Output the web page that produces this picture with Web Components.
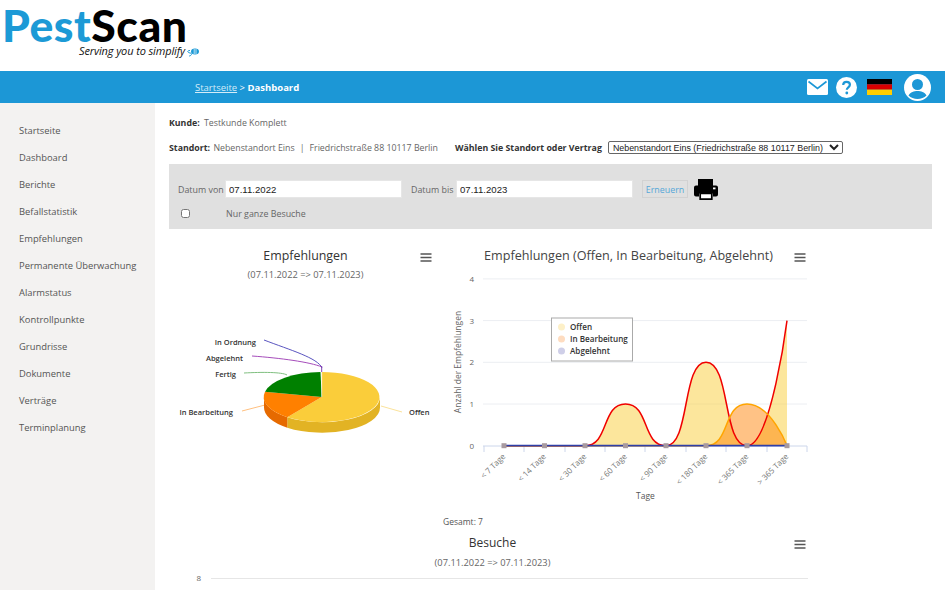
<!DOCTYPE html>
<html lang="de">
<head>
<meta charset="utf-8">
<title>PestScan Dashboard</title>
<style>
    html, body { margin: 0; padding: 0; background: #fff; }
    body { font-family: "Open Sans", "Liberation Sans", sans-serif; color: #555; width: 945px; height: 590px; overflow: hidden; }
</style>
</head>
<body>
<pest-app>
    <pest-logo slot="logo"></pest-logo>
    <pest-topbar slot="topbar"></pest-topbar>
    <pest-nav slot="nav">
        <nav-item>Startseite</nav-item>
        <nav-item>Dashboard</nav-item>
        <nav-item>Berichte</nav-item>
        <nav-item>Befallstatistik</nav-item>
        <nav-item>Empfehlungen</nav-item>
        <nav-item>Permanente Überwachung</nav-item>
        <nav-item>Alarmstatus</nav-item>
        <nav-item>Kontrollpunkte</nav-item>
        <nav-item>Grundrisse</nav-item>
        <nav-item>Dokumente</nav-item>
        <nav-item>Verträge</nav-item>
        <nav-item>Terminplanung</nav-item>
    </pest-nav>
    <customer-info></customer-info>
    <filter-bar></filter-bar>
    <div style="display:flex; align-items:flex-start">
        <pie-chart></pie-chart>
        <area-chart></area-chart>
    </div>
    <visits-chart></visits-chart>
</pest-app>

<script>
const burger = (x, y) => `<path d="M${x} ${y}h11M${x} ${y + 3.5}h11M${x} ${y + 7}h11" stroke="#555" stroke-width="1.7" fill="none"/>`

customElements.define("pest-app", class extends HTMLElement {
    constructor() {
        super()
        this.attachShadow({mode: "open"}).innerHTML = `
        <style>
            :host { display: block; width: 945px; height: 590px; overflow: hidden; }
            .body { display: flex; height: 487px; }
            .content { flex: 1; padding: 0 13px 0 14px; min-width: 0; }
        </style>
        <slot name="logo"></slot>
        <slot name="topbar"></slot>
        <div class="body">
            <slot name="nav"></slot>
            <div class="content"><slot></slot></div>
        </div>
        `
    }
})

customElements.define("pest-logo", class extends HTMLElement {
    constructor() {
        super()
        this.attachShadow({mode: "open"}).innerHTML = `
        <style>
            :host { display: block; height: 71px; box-sizing: border-box; padding: 0 0 0 2px; }
            .name { font: 900 43px/52px Lato, "Open Sans", sans-serif; letter-spacing: .5px; color: #000; transform: scaleX(1.035); transform-origin: left; }
            .name span { color: #1c9ad6; }
            .tag { display: flex; align-items: center; gap: 1px; margin: -8px 0 0 77px; font: italic 11px/13px "Open Sans", sans-serif; color: #111; letter-spacing: -.12px; }
            svg { margin-top: 3px; }
        </style>
        <div class="name"><span>Pest</span>Scan</div>
        <div class="tag">Serving you to simplify
            <svg width="13" height="9" viewBox="0 0 13 9"><ellipse cx="9" cy="3.5" rx="4" ry="3" fill="#1c9ad6"/><path d="M8.2 1v5M10 1v5" stroke="#fff" stroke-width=".7"/><path d="M4 2.5c-3 0-3 2 0 2.500s1 3-1 3" stroke="#1c9ad6" fill="none"/></svg>
        </div>
        `
    }
})

customElements.define("pest-topbar", class extends HTMLElement {
    constructor() {
        super()
        this.attachShadow({mode: "open"}).innerHTML = `
        <style>
            :host { display: flex; align-items: center; height: 32px; background: #1c97d6; color: #fff; font: 9.5px "Open Sans", sans-serif; padding: 0 14px 0 195px; box-sizing: border-box; }
            a { color: #d5ecf8; text-decoration: underline; }
            b { font-weight: 700; }
            .crumbs { flex: 1; }
            .icons { display: flex; align-items: center; }
            svg { display: block; }
        </style>
        <div class="crumbs"><a>Startseite</a> &gt; <b>Dashboard</b></div>
        <div class="icons">
            <svg width="21" height="16" viewBox="0 0 21 16" style="margin-right:8px"><rect width="21" height="16" rx="1.5" fill="#fff"/><path d="M1.5 2.5l9 7 9-7" fill="none" stroke="#1c97d6" stroke-width="1.6"/></svg>
            <svg width="21" height="21" viewBox="0 0 21 21" style="margin-right:10px"><circle cx="10.5" cy="10.5" r="10.5" fill="#fff"/><path d="M7.2 8c0-2 1.5-3.2 3.4-3.2s3.3 1.1 3.3 2.9c0 2.600-3.100 2.600-3.100 5.100" fill="none" stroke="#1c97d6" stroke-width="2.200"/><circle cx="10.800" cy="16" r="1.400" fill="#1c97d6"/></svg>
            <svg width="25" height="16" viewBox="0 0 25 16" style="margin-right:12px"><rect width="25" height="5.400" fill="#000"/><rect y="5.300" width="25" height="5.400" fill="#d80000"/><rect y="10.600" width="25" height="5.400" fill="#ffce00"/></svg>
            <svg width="27" height="27" viewBox="0 0 27 27"><circle cx="13.500" cy="13.500" r="13.500" fill="#fff"/><circle cx="13.500" cy="10.500" r="5.500" fill="#1c97d6"/><path d="M4.500 21.500c2-3.500 5.500-4.500 9-4.500s7 1 9 4.500c-2.200 2.300-5.500 3.500-9 3.500s-6.800-1.200-9-3.500z" fill="#1c97d6"/></svg>
        </div>
        `
    }
})

customElements.define("pest-nav", class extends HTMLElement {
    constructor() {
        super()
        this.attachShadow({mode: "open"}).innerHTML = `
        <style>
            :host { display: block; width: 155px; height: 100%; background: #f3f2f1; box-sizing: border-box; padding: 14px 0 0 19px; flex: none; }
        </style>
        <slot></slot>
        `
    }
})

customElements.define("nav-item", class extends HTMLElement {
    constructor() {
        super()
        this.attachShadow({mode: "open"}).innerHTML = `
        <style>
            :host { display: block; height: 27px; font: 9.4px/27px "Open Sans", sans-serif; color: #555; white-space: nowrap; }
        </style>
        <slot></slot>
        `
    }
})

customElements.define("customer-info", class extends HTMLElement {
    constructor() {
        super()
        this.attachShadow({mode: "open"}).innerHTML = `
        <style>
            :host { display: block; font: 8.8px "Open Sans", sans-serif; color: #666; padding-top: 13px; height: 61px; box-sizing: border-box; }
            b { color: #333; font-weight: 700; margin-right: 2px; }
            .row { display: flex; align-items: center; height: 13px; white-space: nowrap; }
            .row + .row { margin-top: 12px; }
            .place { margin-right: 1px; }
            .sep { margin: 0 5px; }
            .pick { margin-left: 17px; margin-right: 6px; }
            select { width: 235px; height: 13px; padding: 0; font: 8.9px "Liberation Sans", sans-serif; color: #222; background: #fff; border: 1px solid #666; border-radius: 2px; outline: 0; }
        </style>
        <div class="row"><b>Kunde:</b>&nbsp;Testkunde Komplett</div>
        <div class="row"><b class="place">Standort:</b>&nbsp;Nebenstandort Eins<span class="sep">|</span>Friedrichstraße 88 10117 Berlin
            <b class="pick">Wählen Sie Standort oder Vertrag</b>
            <select><option>Nebenstandort Eins (Friedrichstraße 88 10117 Berlin)</option></select>
        </div>
        `
    }
})

customElements.define("filter-bar", class extends HTMLElement {
    constructor() {
        super()
        this.attachShadow({mode: "open"}).innerHTML = `
        <style>
            :host { display: block; height: 65px; background: #e0e0e0; box-sizing: border-box; padding: 14px 9px 0; font: 8.9px "Open Sans", sans-serif; color: #666; }
            .row { display: flex; align-items: center; }
            .row.top { height: 22px; }
            label { flex: none; white-space: nowrap; }
            input[type=text] { flex: none; width: 177px; height: 18px; box-sizing: border-box; border: 1px solid #e6e6e6; background: #fff; padding: 0 3px; font: 9.6px "Liberation Sans", sans-serif; color: #222; outline: 0; }
            .von { width: 47px; } .bis { width: 45px; margin-left: 9px; }
            button { flex: none; margin-left: 9px; width: 46px; height: 18px; padding: 0; background: #e0e0e0; border: 1px solid #d2d2d2; color: #55a7d8; font: 8.9px "Open Sans", sans-serif; }
            svg { flex: none; margin-left: 6px; display: block; }
            .check { margin-top: 5px; height: 16px; }
            input[type=checkbox] { margin: 0 0 0 3px; width: 9px; height: 9px; }
            .check span { margin-left: 36px; }
        </style>
        <div class="row top">
            <label class="von">Datum von</label><input type="text" value="07.11.2022">
            <label class="bis">Datum bis</label><input type="text" value="07.11.2023">
            <button>Erneuern</button>
            <svg width="24" height="21" viewBox="0 0 24 21"><path d="M4 0h15v7H4z" fill="#000"/><path d="M2 6.500h20a2 2 0 0 1 2 2v7a2 2 0 0 1-2 2h-3v-3H5v3H2a2 2 0 0 1-2-2v-7a2 2 0 0 1 2-2z" fill="#000"/><rect x="19" y="8.500" width="2.500" height="1.800" fill="#fff"/><path d="M6.200 14.500h11.600v5.600H6.200z" fill="#fff" stroke="#000" stroke-width="1.700"/></svg>
        </div>
        <div class="row check"><input type="checkbox"><span>Nur ganze Besuche</span></div>
        `
    }
})

customElements.define("pie-chart", class extends HTMLElement {
    constructor() {
        super()
        this.attachShadow({mode: "open"}).innerHTML = `
        <style>
            :host { display: block; width: 276px; height: 285px; flex: none; }
            svg { display: block; }
            text { font-family: "Open Sans", sans-serif; }
            .l { font-size: 7.500px; font-weight: 600; fill: #333; }
        </style>
        <svg width="276" height="285" viewBox="169 229 276 285">
            <text x="305.500" y="259.500" text-anchor="middle" font-size="12.400" fill="#333">Empfehlungen</text>
            <text x="305.500" y="278" text-anchor="middle" font-size="9.300" fill="#666">(07.11.2022 =&gt; 07.11.2023)</text>
            ${burger(420.500, 254)}
            <path d="M264 340C290 350 318 358 322 368" fill="none" stroke="#5a55c0"/>
            <path d="M252 356C280 358 310 362 322 367" fill="none" stroke="#a64dbb"/>
            <path d="M244 373C262 372 282 372 287 375" fill="none" stroke="#7fbf7f"/>
            <path d="M242 411L265 405" fill="none" stroke="#ffc080"/>
            <path d="M381 406L402 412" fill="none" stroke="#fbe39b"/>
            <text class="l" x="256" y="345" text-anchor="end">In Ordnung</text>
            <text class="l" x="243" y="361" text-anchor="end">Abgelehnt</text>
            <text class="l" x="236" y="377" text-anchor="end">Fertig</text>
            <text class="l" x="233" y="415" text-anchor="end">In Bearbeitung</text>
            <text class="l" x="409" y="415">Offen</text>
            <path d="M380 397A58 25 0 0 1 287.300 417.200V427.700A58 25 0 0 0 380 407.500Z" fill="#e2b324"/>
            <path d="M287.300 417.200A58 25 0 0 1 264 397V407.500A58 25 0 0 0 287.300 427.700Z" fill="#e66a00"/>
            <path d="M321.700 397V372A58 25 0 1 1 287.300 417.200Z" fill="#facd3a"/>
            <path d="M321.700 397L287.300 417.200A58 25 0 0 1 265 391.700Z" fill="#ff8000"/>
            <path d="M321.700 397L265 391.700A58 25 0 0 1 320.500 372Z" fill="#008000"/>
            <path d="M321.700 397V372" stroke="#fff" stroke-width=".6"/>
            <path d="M321.700 372V366" stroke="#7a3fb0"/>
        </svg>
        `
    }
})

customElements.define("area-chart", class extends HTMLElement {
    constructor() {
        super()
        const xs = [504, 544.500, 585, 625.500, 666, 706, 747, 787]
        const y0 = 445.700, unit = 41.700
        const labels = ["< 7 Tage", "< 14 Tage", "< 30 Tage", "< 60 Tage", "< 90 Tage", "< 180 Tage", "< 365 Tage", "> 365 Tage"]
        const spline = (vals) => {
            let d = `M${xs[0]} ${y0 - vals[0] * unit}`
            for(let i = 1; i < vals.length; i++) {
                let dx = xs[i] - xs[i - 1]
                let ya = y0 - vals[i - 1] * unit, yb = y0 - vals[i] * unit
                let cb = i == vals.length - 1 ? xs[i] : xs[i] - dx * .6
                d += `C${xs[i - 1] + dx * .6} ${ya} ${cb} ${yb} ${xs[i]} ${yb}`
            }
            return d
        }
        const offen = spline([0, 0, 0, 1, 0, 2, 0, 3])
        const bearb = spline([0, 0, 0, 0, 0, 0, 1, 0])
        const close = `L787 ${y0}L504 ${y0}Z`
        const grid = [4, 3, 2, 1].map(v => `<path d="M483 ${y0 - v * unit}H807" stroke="#eceef2"/>`).join("")
        const yLabels = [4, 3, 2, 1, 0].map(v => `<text x="474" y="${y0 - v * unit + 3}" text-anchor="end" font-size="8" fill="#666">${v}</text>`).join("")
        const ticks = [484, 524, 565, 605, 645, 686, 726, 767, 807].map(x => `<path d="M${x} 446V452" stroke="#ccd6eb"/>`).join("")
        const xLabels = labels.map((t, i) => `<text transform="translate(${xs[i] + 2} 457) rotate(-45)" text-anchor="end" font-size="8" fill="#777">${t.replace("<", "&lt;").replace(">", "&gt;")}</text>`).join("")
        const marks = xs.map(x => `<rect x="${x - 2.500}" y="${y0 - 2.500}" width="5" height="5" fill="#a89aa0"/>`).join("")
        this.attachShadow({mode: "open"}).innerHTML = `
        <style>
            :host { display: block; width: 376px; height: 285px; flex: none; }
            svg { display: block; }
            text { font-family: "Open Sans", sans-serif; }
        </style>
        <svg width="376" height="285" viewBox="445 229 376 285">
            <text x="628.500" y="259.500" text-anchor="middle" font-size="12.600" fill="#444">Empfehlungen (Offen, In Bearbeitung, Abgelehnt)</text>
            ${burger(794.500, 254)}
            ${grid}
            ${yLabels}
            <text transform="translate(461 362) rotate(-90)" text-anchor="middle" font-size="8.500" fill="#666">Anzahl der Empfehlungen</text>
            <path d="M483 446H807" stroke="#ccd6eb"/>
            ${ticks}
            <path d="${offen}${close}" fill="#facd3a" fill-opacity=".5"/>
            <path d="${bearb}${close}" fill="#ff8000" fill-opacity=".48"/>
            <path d="${offen}" fill="none" stroke="#f00000" stroke-width="1.500"/>
            <path d="${bearb}" fill="none" stroke="#ffa500" stroke-width="1.500"/>
            <path d="M504 ${y0}H787" stroke="#2f3fa8" stroke-width="1.700"/>
            ${marks}
            ${xLabels}
            <text x="645.500" y="499" text-anchor="middle" font-size="8.500" fill="#555">Tage</text>
            <rect x="551.500" y="318" width="81" height="43" fill="#fff" fill-opacity=".9" stroke="#aaa"/>
            <circle cx="561.500" cy="327" r="3.500" fill="#fdf0c8"/>
            <circle cx="561.500" cy="339" r="3.500" fill="#fedcc0"/>
            <circle cx="561.500" cy="351" r="3.500" fill="#cfcfe8"/>
            <text x="570" y="330" font-size="8.100" font-weight="600" fill="#333">Offen</text>
            <text x="570" y="342" font-size="8.100" font-weight="600" fill="#333">In Bearbeitung</text>
            <text x="570" y="354" font-size="8.100" font-weight="600" fill="#333">Abgelehnt</text>
        </svg>
        `
    }
})

customElements.define("visits-chart", class extends HTMLElement {
    constructor() {
        super()
        this.attachShadow({mode: "open"}).innerHTML = `
        <style>
            :host { display: block; width: 652px; height: 76px; }
            svg { display: block; }
            text { font-family: "Open Sans", sans-serif; }
        </style>
        <svg width="652" height="76" viewBox="169 514 652 76">
            <text x="443" y="525" font-size="8.500" fill="#555">Gesamt: 7</text>
            <text x="492.500" y="547" text-anchor="middle" font-size="12" fill="#333">Besuche</text>
            <text x="492.500" y="566" text-anchor="middle" font-size="9.300" fill="#666">(07.11.2022 =&gt; 07.11.2023)</text>
            ${burger(794.500, 541)}
            <text x="201" y="581" text-anchor="end" font-size="8" fill="#666">8</text>
            <path d="M211 578.500H808" stroke="#e6e6e6"/>
        </svg>
        `
    }
})
</script>
</body>
</html>
